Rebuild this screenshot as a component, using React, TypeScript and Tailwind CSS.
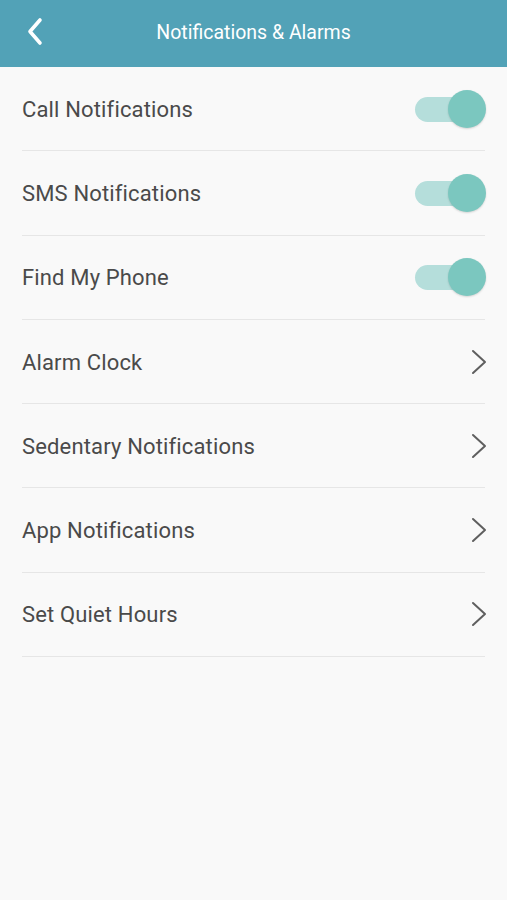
const rows: { label: string; toggle?: boolean }[] = [
  { label: 'Call Notifications', toggle: true },
  { label: 'SMS Notifications', toggle: true },
  { label: 'Find My Phone', toggle: true },
  { label: 'Alarm Clock' },
  { label: 'Sedentary Notifications' },
  { label: 'App Notifications' },
  { label: 'Set Quiet Hours' },
];

function Toggle() {
  return (
    <div className="relative mr-[-1px] h-[38px] w-[71px]">
      <div className="absolute left-0 top-[7px] h-[25px] w-[52px] rounded-full bg-[#b5dedb]" />
      <div className="absolute right-0 top-0 h-[38px] w-[38px] rounded-full bg-[#7bc7bf] shadow-[0_1px_2px_rgba(0,0,0,0.15)]" />
    </div>
  );
}

function Chevron() {
  return (
    <svg width="16" height="26" viewBox="0 0 16 26" fill="none" className="mr-[-2px]">
      <path d="M2 2l12 11L2 24" stroke="#5f5f5f" strokeWidth="2" strokeLinecap="round" strokeLinejoin="round" />
    </svg>
  );
}

export default function App() {
  return (
    <div className="min-h-[900px] w-full bg-[#f9f9f9] font-['Roboto',sans-serif]">
      <header className="relative flex h-[67px] items-center justify-center bg-[#52a2b7]">
        <button className="absolute left-[25px] top-[17px]">
          <svg width="22" height="30" viewBox="0 0 22 30" fill="none">
            <path d="M15 3L5 14.5L15 26" stroke="white" strokeWidth="3.6" strokeLinecap="round" strokeLinejoin="round" />
          </svg>
        </button>
        <h1 className="mb-[2px] text-[19.5px] text-white">Notifications &amp; Alarms</h1>
      </header>
      <ul className="px-[22px]">
        {rows.map((row) => (
          <li key={row.label} className="flex h-[84.3px] items-center justify-between border-b border-[#e6e6e6]">
            <span className="pt-[1px] text-[22px] tracking-[0.15px] text-[#4a4a4a]">{row.label}</span>
            {row.toggle ? <Toggle /> : <Chevron />}
          </li>
        ))}
      </ul>
    </div>
  );
}
